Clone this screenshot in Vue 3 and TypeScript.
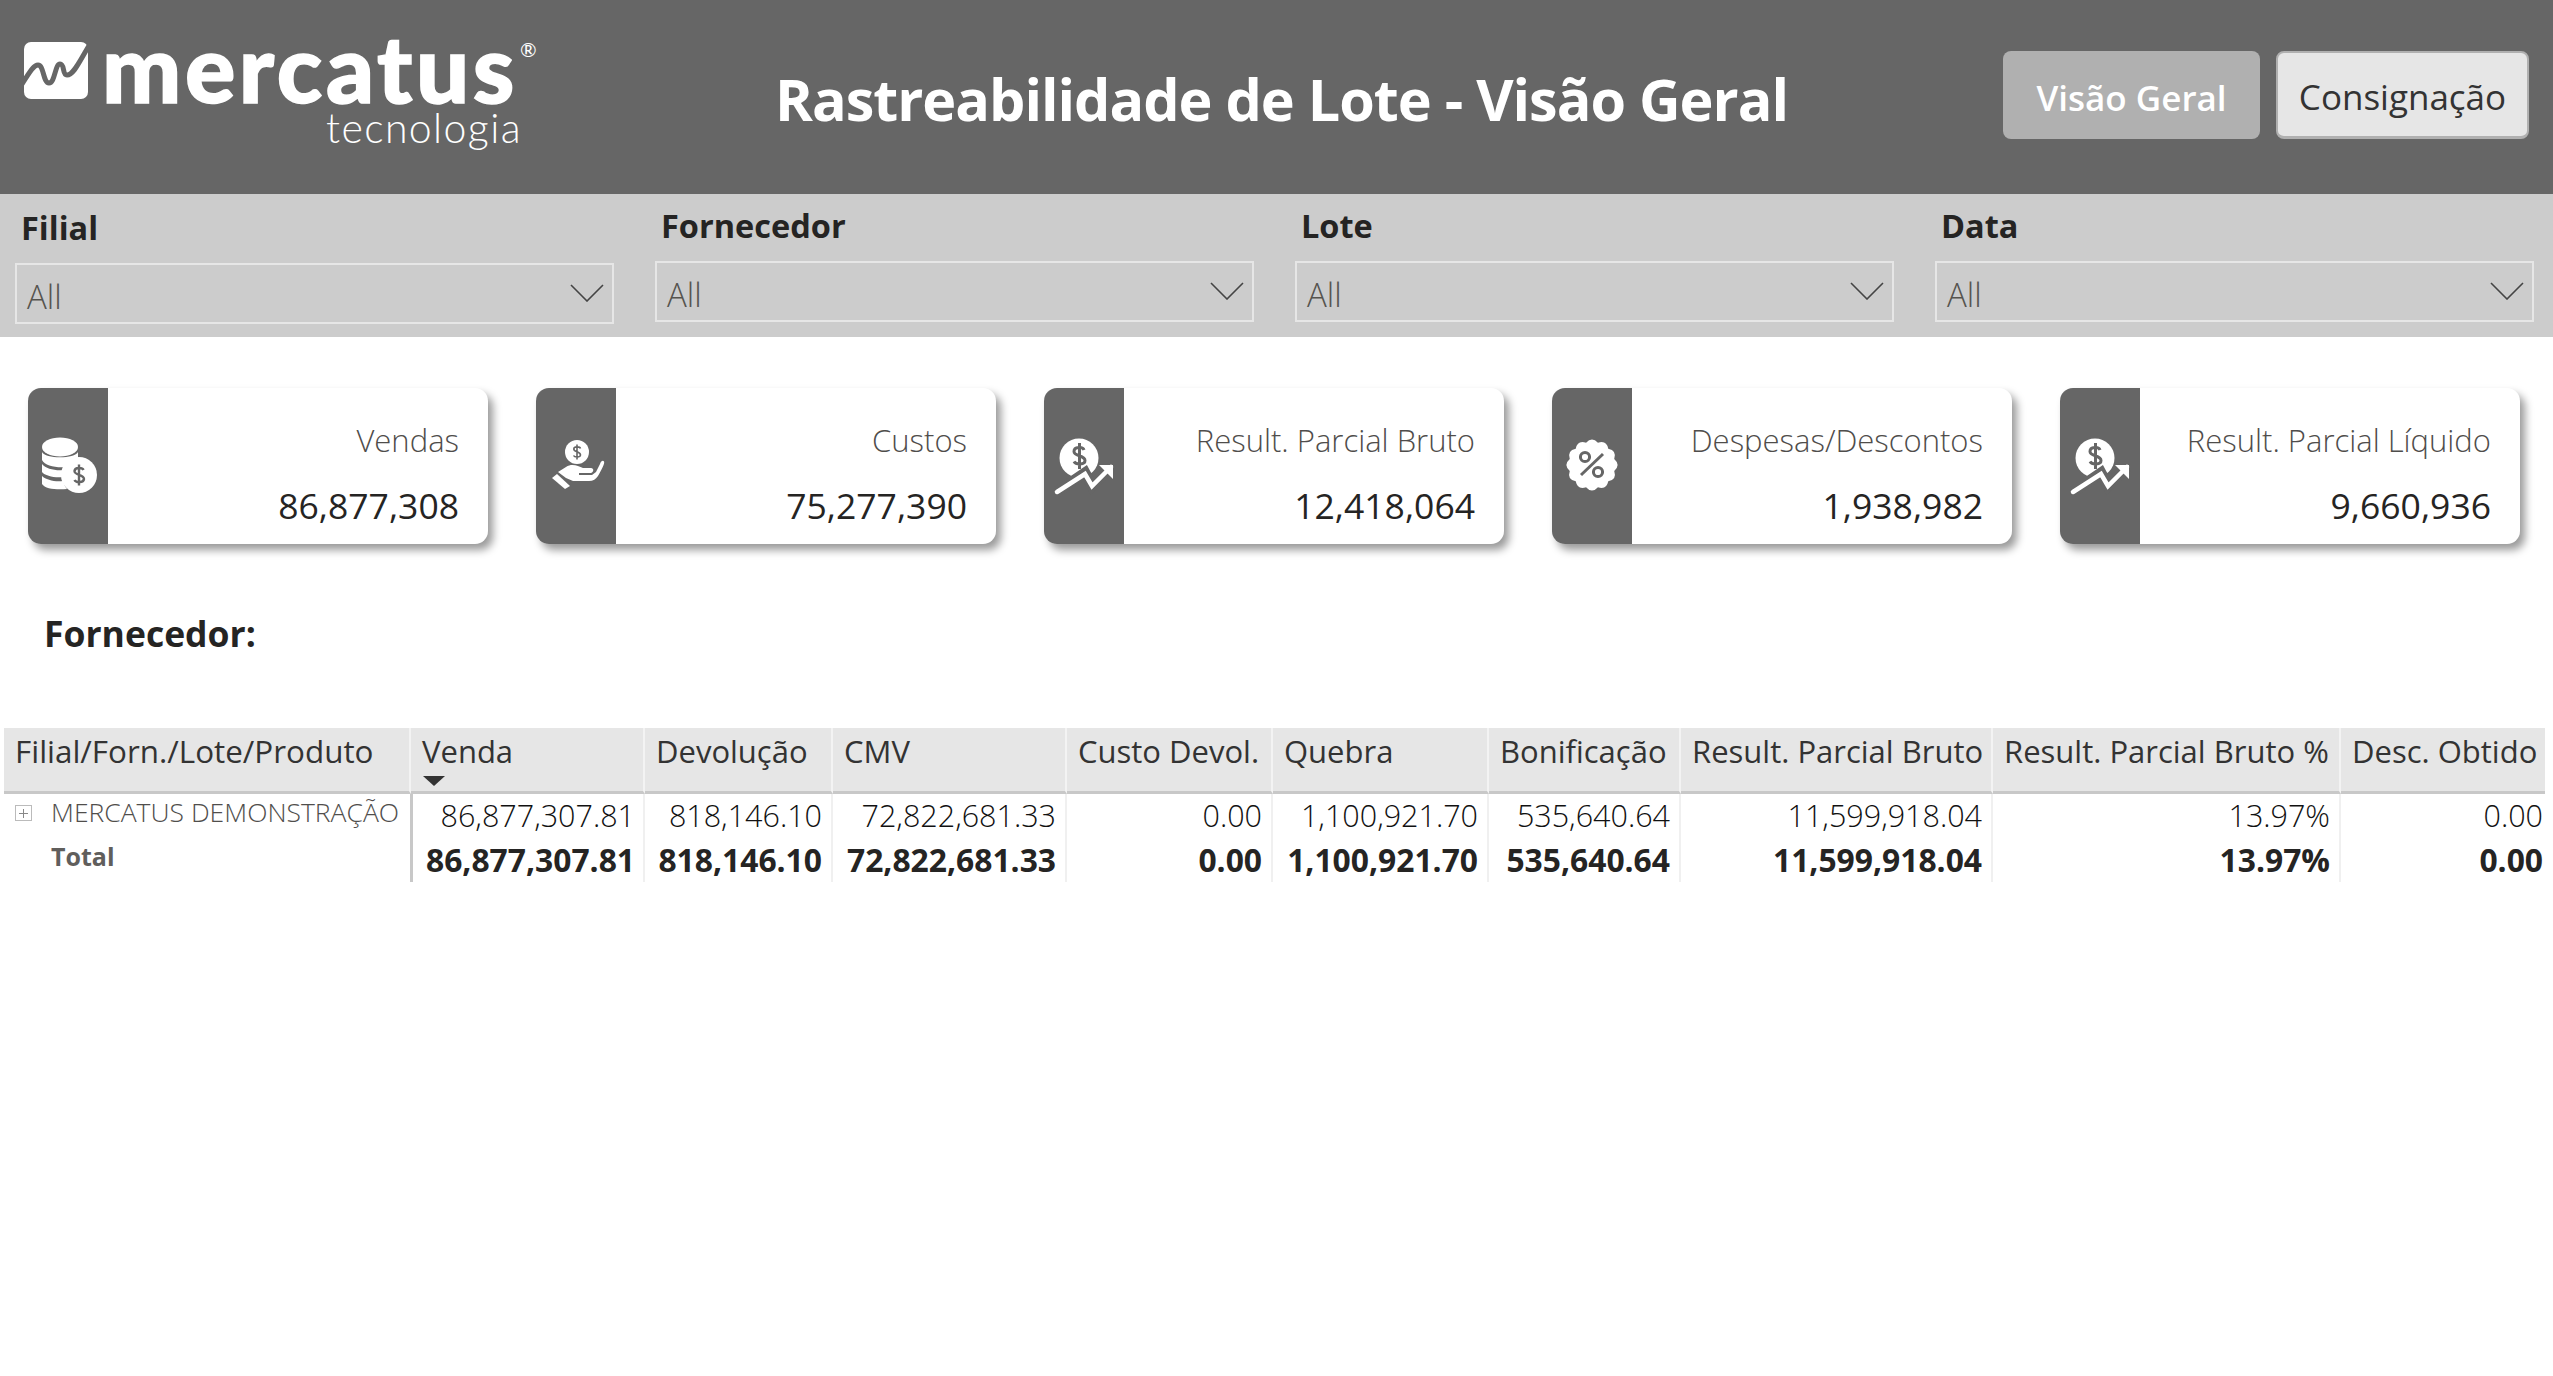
<script setup lang="ts">
interface Filter {
  label: string
}

interface Kpi {
  label: string
  value: string
  icon: 'coins' | 'hand' | 'trend' | 'percent'
}

const filters: Filter[] = [
  { label: 'Filial' },
  { label: 'Fornecedor' },
  { label: 'Lote' },
  { label: 'Data' }
]

const kpis: Kpi[] = [
  { label: 'Vendas', value: '86,877,308', icon: 'coins' },
  { label: 'Custos', value: '75,277,390', icon: 'hand' },
  { label: 'Result. Parcial Bruto', value: '12,418,064', icon: 'trend' },
  { label: 'Despesas/Descontos', value: '1,938,982', icon: 'percent' },
  { label: 'Result. Parcial Líquido', value: '9,660,936', icon: 'trend' }
]

const columns = [
  'Venda',
  'Devolução',
  'CMV',
  'Custo Devol.',
  'Quebra',
  'Bonificação',
  'Result. Parcial Bruto',
  'Result. Parcial Bruto %',
  'Desc. Obtido'
]

const rowValues = [
  '86,877,307.81',
  '818,146.10',
  '72,822,681.33',
  '0.00',
  '1,100,921.70',
  '535,640.64',
  '11,599,918.04',
  '13.97%',
  '0.00'
]

// Scalloped edge of the discount badge
function badgePath(cx: number, cy: number, outer: number, inner: number, lobes: number): string {
  const step = (Math.PI * 2) / lobes
  const pt = (r: number, a: number) =>
    `${(cx + r * Math.sin(a)).toFixed(2)} ${(cy - r * Math.cos(a)).toFixed(2)}`
  let d = `M${pt(inner, -step / 2)}`
  for (let i = 0; i < lobes; i++) {
    const a = i * step
    d += `Q${pt(outer + (outer - inner), a)} ${pt(inner, a + step / 2)}`
  }
  return d + 'Z'
}

const badge = badgePath(40, 77, 26, 23, 12)
</script>

<template>
  <div class="page">
    <header class="top">
      <div class="logo">
        <svg class="logo-mark" viewBox="0 0 64 57" width="64" height="57">
          <rect width="64" height="57" rx="7" fill="#fff" />
          <path
            d="M-2 42C4 33 9 23 14 23C20 23 19 41 25 41C31 41 31 22 36 22C41 22 38 33 43 33C50 33 56 18 66 2"
            fill="none"
            stroke="#666"
            stroke-width="5"
          />
        </svg>
        <div class="logo-text">
          <div class="logo-name">mercatus<span class="logo-reg">®</span></div>
          <div class="logo-sub">tecnologia</div>
        </div>
      </div>
      <h1 class="title">Rastreabilidade de Lote - Visão Geral</h1>
      <div class="nav">
        <button class="nav-btn nav-active">Visão Geral</button>
        <button class="nav-btn">Consignação</button>
      </div>
    </header>

    <section class="filters">
      <div v-for="(f, i) in filters" :key="f.label" class="filter" :class="{ first: i === 0 }">
        <div class="filter-label">{{ f.label }}</div>
        <div class="filter-box">
          <span>All</span>
          <svg width="34" height="18" viewBox="0 0 34 18">
            <path d="M1 1L17 17L33 1" fill="none" stroke="#444" stroke-width="1.6" />
          </svg>
        </div>
      </div>
    </section>

    <section class="cards">
      <div v-for="k in kpis" :key="k.label" class="card">
        <div class="card-icon">
          <svg width="80" height="156" viewBox="0 0 80 156">
            <g v-if="k.icon === 'coins'">
              <ellipse cx="32" cy="59" rx="18" ry="9.5" fill="#fff" />
              <path d="M14 64C17 71 47 71 50 64V72C47 73 42 75 39 79C28 80 17 78 14 72Z" fill="#fff" />
              <path d="M14 76C18 81 27 83 37 82C36 84 35 87 35 89C27 90 17 88 14 84Z" fill="#fff" />
              <path d="M14 88C18 92 27 94 35 93C36 96 37 99 39 101C29 102 17 101 14 96Z" fill="#fff" />
              <circle cx="51" cy="87" r="18" fill="#fff" />
              <path
                d="M55.5 82C54.5 79.5 47 79 46.5 83C46 87.5 56 86 56 91C55.5 95 48 95 46.5 92M51 76.5V97.5"
                fill="none"
                stroke="#666"
                stroke-width="2.4"
              />
            </g>
            <g v-else-if="k.icon === 'hand'">
              <circle cx="41" cy="64" r="12" fill="#fff" />
              <path
                d="M44.5 60.5C44 58.5 38 58 37.8 61C37.6 64 44.5 63.5 44.5 67C44.2 69.8 38.5 69.5 37.5 67.5M41 56.5V71.5"
                fill="none"
                stroke="#666"
                stroke-width="1.6"
              />
              <path d="M22 84L30 79C36 75 42 78 47 80H55C58 80 58 84 55 85H43V87H56L60 84L64 76C65 73 67 72 68 73.5C69 75 66 81 62 88C60 91 57 93 53 93H37L30 90Z" fill="#fff" />
              <path d="M21 86L34 98L29 101L16 90Z" fill="#fff" />
            </g>
            <g v-else-if="k.icon === 'trend'">
              <circle cx="35" cy="70" r="19.5" fill="#fff" />
              <path
                d="M40 62C39 58.5 30 58.5 30 63.5C30 68.5 41 67 41 72.5C41 77 32 77 30 73.5M35.5 55V81"
                fill="none"
                stroke="#666"
                stroke-width="3"
              />
              <path d="M13 104L41 85L48 98L67 79" fill="none" stroke="#666" stroke-width="11" />
              <path d="M13 104L41 86L48 98L67 79" fill="none" stroke="#fff" stroke-width="4.5" stroke-linecap="round" />
              <path d="M55 77H69V91Z" fill="#fff" />
            </g>
            <g v-else>
              <path :d="badge" fill="#fff" />
              <circle cx="33" cy="69" r="4.6" fill="none" stroke="#666" stroke-width="3" />
              <circle cx="46" cy="84" r="4.6" fill="none" stroke="#666" stroke-width="3" />
              <path d="M51 66L29 87" stroke="#666" stroke-width="3" />
            </g>
          </svg>
        </div>
        <div class="card-body">
          <div class="card-label">{{ k.label }}</div>
          <div class="card-value">{{ k.value }}</div>
        </div>
      </div>
    </section>

    <h2 class="section-title">Fornecedor:</h2>

    <section class="matrix">
      <div class="cell head first-col">Filial/Forn./Lote/Produto</div>
      <div v-for="(c, i) in columns" :key="c" class="cell head" :class="{ last: i === columns.length - 1 }">
        {{ c }}
        <span v-if="i === 0" class="sort"></span>
      </div>

      <div class="cell label first-col">
        <span class="expand"></span>
        <span>MERCATUS DEMONSTRAÇÃO</span>
      </div>
      <div
        v-for="(v, i) in rowValues"
        :key="'r' + i"
        class="cell num"
        :class="{ divider: i === 0, last: i === rowValues.length - 1 }"
      >
        {{ v }}
      </div>

      <div class="cell label total-label first-col">Total</div>
      <div
        v-for="(v, i) in rowValues"
        :key="'t' + i"
        class="cell num total"
        :class="{ divider: i === 0, last: i === rowValues.length - 1 }"
      >
        {{ v }}
      </div>
    </section>
  </div>
</template>

<style scoped>
.page {
  width: 2553px;
  height: 1376px;
  overflow: hidden;
  background: #fff;
  font-family: "Open Sans", "Noto Sans", sans-serif;
  color: #252423;
}

.top {
  height: 194px;
  background: #666;
  display: flex;
  align-items: flex-start;
  box-sizing: border-box;
  padding-left: 24px;
  color: #fff;
}

.logo {
  display: flex;
  gap: 14px;
  width: 751px;
  padding-top: 42px;
}

.logo-mark {
  flex: none;
}

.logo-name {
  font-family: Lato, sans-serif;
  font-weight: 900;
  font-size: 94px;
  line-height: 50px;
  letter-spacing: 3.6px;
  -webkit-text-stroke: 1.5px #fff;
  white-space: nowrap;
}

.logo-reg {
  font-size: 20px;
  font-weight: 400;
  letter-spacing: 0;
  -webkit-text-stroke: 0;
  vertical-align: 46px;
  line-height: 0;
  margin-left: 2px;
}

.logo-sub {
  font-family: Lato, sans-serif;
  font-weight: 300;
  font-size: 41px;
  line-height: 48px;
  letter-spacing: 1.4px;
  padding-left: 224px;
  margin-top: 12px;
}

.title {
  margin: 67px 0 0;
  width: 1228px;
  flex: none;
  font-size: 57.5px;
  line-height: 64px;
  letter-spacing: -1px;
  font-weight: 700;
  white-space: nowrap;
}

.nav {
  display: flex;
  gap: 16px;
  padding-top: 51px;
}

.nav-btn {
  width: 253px;
  height: 88px;
  font-family: inherit;
  font-size: 35px;
  color: #333;
  background: #e6e6e6;
  border: 2px solid #b0b0b0;
  border-bottom-width: 3px;
  border-radius: 8px;
  padding: 4px 0 0;
}

.nav-active {
  width: 257px;
  background: #b0b0b0;
  color: #fff;
  font-weight: 600;
  border: none;
}

.filters {
  height: 143px;
  background: #ccc;
  display: flex;
  gap: 41px;
  padding-left: 15px;
  box-sizing: border-box;
}

.filter {
  width: 599px;
  padding-top: 7px;
}

.filter.first {
  padding-top: 9px;
}

.filter-label {
  font-size: 32.5px;
  line-height: 50px;
  font-weight: 700;
  padding-left: 6px;
  margin-bottom: 10px;
  color: #252423;
}

.filter-box {
  height: 61px;
  box-sizing: border-box;
  border: 2px solid #e6e6e6;
  display: flex;
  align-items: center;
  justify-content: space-between;
  padding: 6px 8px 0 10px;
  font-size: 33px;
  font-weight: 300;
  color: #56544f;
}

.filter-box svg {
  margin-top: -8px;
}

.cards {
  display: flex;
  gap: 48px;
  padding: 51px 0 0 28px;
}

.card {
  width: 460px;
  height: 156px;
  display: flex;
  background: #fff;
  border-radius: 13px;
  box-shadow: 5px 6px 9px rgba(0, 0, 0, 0.4);
  overflow: hidden;
}

.card-icon {
  width: 80px;
  flex: none;
  background: #666;
}

.card-icon svg {
  display: block;
}

.card-body {
  flex: 1;
  text-align: right;
  padding: 30px 29px 0 0;
}

.card-label {
  font-size: 31px;
  line-height: 44px;
  font-weight: 300;
  color: #4f4d4b;
}

.card-value {
  font-size: 35.5px;
  line-height: 48px;
  margin-top: 19px;
  font-weight: 500;
  color: #252423;
}

.section-title {
  margin: 64px 0 0 44px;
  font-size: 35.5px;
  line-height: 50px;
  font-weight: 700;
  color: #252423;
}

.matrix {
  margin: 70px 0 0 4px;
  width: 2541px;
  display: grid;
  grid-template-columns: 407px 234px 188px 234px 206px 216px 192px 312px 348px 204px;
  grid-template-rows: 66px 44px 44px;
}

.cell {
  box-sizing: border-box;
  white-space: nowrap;
  position: relative;
}

.head {
  background: #e6e6e6;
  border-bottom: 3px solid #c8c8c8;
  border-right: 2px solid #f3f3f3;
  padding: 0 0 0 11px;
  font-size: 31px;
  line-height: 46px;
  color: #333;
}

.head.first-col {
  font-size: 31.4px;
}

.head.last {
  border-right: none;
}

.sort {
  position: absolute;
  left: 12px;
  top: 48px;
  width: 0;
  height: 0;
  border-left: 11px solid transparent;
  border-right: 11px solid transparent;
  border-top: 10px solid #333;
}

.label {
  display: flex;
  align-items: flex-start;
  font-size: 26.5px;
  font-weight: 300;
  line-height: 37px;
  color: #504e4c;
  padding-left: 11px;
}

.expand {
  width: 17px;
  height: 16px;
  margin: 11px 19px 0 0;
  flex: none;
  border: 1px solid #bbb;
  box-sizing: border-box;
  background:
    linear-gradient(#888, #888) center / 9px 1px no-repeat,
    linear-gradient(#888, #888) center / 1px 9px no-repeat;
}

.total-label {
  font-weight: 700;
  font-size: 25px;
  padding-left: 47px;
  line-height: 36px;
  color: #605e5c;
}

.num {
  text-align: right;
  padding-right: 9px;
  font-size: 30.5px;
  font-weight: 300;
  line-height: 43px;
  color: #111;
  border-right: 2px solid #f0f0f0;
}

.num.divider {
  padding-right: 8px;
  border-left: 3px solid #c8c8c8;
  margin-left: -1px;
}

.num.last {
  border-right: none;
  padding-right: 2px;
}

.total {
  font-weight: 700;
  font-size: 31.8px;
  color: #252423;
}
</style>

<style>
html,
body {
  margin: 0;
  background: #fff;
}
</style>
